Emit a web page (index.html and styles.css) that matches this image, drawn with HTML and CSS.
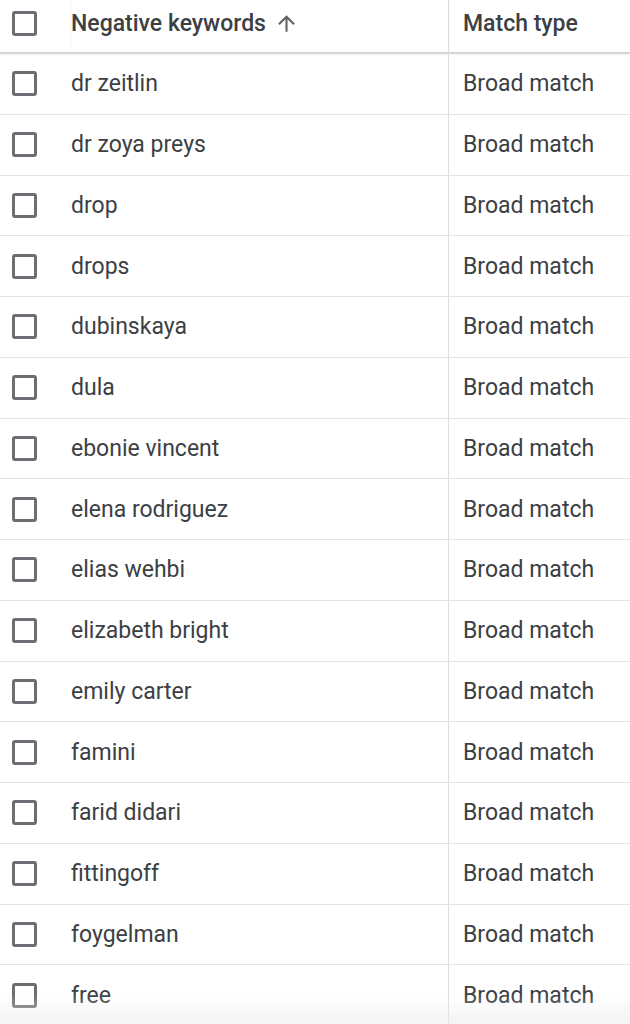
FILE: index.html
```html
<!DOCTYPE html>
<html lang="en">
<head>
  <meta charset="UTF-8" />
  <meta name="viewport" content="width=device-width, initial-scale=1" />
  <title>Negative keywords</title>
  <link rel="stylesheet" href="styles.css">
</head>
<body>
  <table class="kw-table">
    <thead>
      <tr>
        <th class="col-check"><span class="checkbox"></span></th>
        <th class="col-keyword">
          <span class="head-label">Negative keywords
            <svg class="sort-icon" viewBox="0 0 24 24" width="24" height="24"><path d="M4 12l1.41 1.41L11 7.83V20h2V7.83l5.58 5.59L20 12l-8-8-8 8z"/></svg>
          </span>
        </th>
        <th class="col-match">Match type</th>
      </tr>
    </thead>
    <tbody>
      <tr><td class="col-check"><span class="checkbox"></span></td><td class="col-keyword">dr zeitlin</td><td class="col-match">Broad match</td></tr>
      <tr><td class="col-check"><span class="checkbox"></span></td><td class="col-keyword">dr zoya preys</td><td class="col-match">Broad match</td></tr>
      <tr><td class="col-check"><span class="checkbox"></span></td><td class="col-keyword">drop</td><td class="col-match">Broad match</td></tr>
      <tr><td class="col-check"><span class="checkbox"></span></td><td class="col-keyword">drops</td><td class="col-match">Broad match</td></tr>
      <tr><td class="col-check"><span class="checkbox"></span></td><td class="col-keyword">dubinskaya</td><td class="col-match">Broad match</td></tr>
      <tr><td class="col-check"><span class="checkbox"></span></td><td class="col-keyword">dula</td><td class="col-match">Broad match</td></tr>
      <tr><td class="col-check"><span class="checkbox"></span></td><td class="col-keyword">ebonie vincent</td><td class="col-match">Broad match</td></tr>
      <tr><td class="col-check"><span class="checkbox"></span></td><td class="col-keyword">elena rodriguez</td><td class="col-match">Broad match</td></tr>
      <tr><td class="col-check"><span class="checkbox"></span></td><td class="col-keyword">elias wehbi</td><td class="col-match">Broad match</td></tr>
      <tr><td class="col-check"><span class="checkbox"></span></td><td class="col-keyword">elizabeth bright</td><td class="col-match">Broad match</td></tr>
      <tr><td class="col-check"><span class="checkbox"></span></td><td class="col-keyword">emily carter</td><td class="col-match">Broad match</td></tr>
      <tr><td class="col-check"><span class="checkbox"></span></td><td class="col-keyword">famini</td><td class="col-match">Broad match</td></tr>
      <tr><td class="col-check"><span class="checkbox"></span></td><td class="col-keyword">farid didari</td><td class="col-match">Broad match</td></tr>
      <tr><td class="col-check"><span class="checkbox"></span></td><td class="col-keyword">fittingoff</td><td class="col-match">Broad match</td></tr>
      <tr><td class="col-check"><span class="checkbox"></span></td><td class="col-keyword">foygelman</td><td class="col-match">Broad match</td></tr>
      <tr><td class="col-check"><span class="checkbox"></span></td><td class="col-keyword">free</td><td class="col-match">Broad match</td></tr>
    </tbody>
  </table>
  <div class="bottom-fade"></div>
</body>
</html>
```

FILE: styles.css
```css
body {
  margin: 0;
  background: #fff;
  font-family: Roboto, "Liberation Sans", Arial, sans-serif;
  color: #3c4043;
  overflow: hidden;
}
.kw-table {
  border-collapse: collapse;
  table-layout: fixed;
  width: 630px;
}
.kw-table th,
.kw-table td {
  padding: 0;
  text-align: left;
  vertical-align: middle;
  font-size: 23px;
  white-space: nowrap;
}
.kw-table th {
  height: 46px;
  padding-bottom: 6px;
  font-weight: 500;
  border-bottom: 2px solid #d6d6d6;
  box-shadow: 0 2px 2px rgba(0, 0, 0, 0.06);
}
.kw-table td {
  height: 59.75px;
  border-bottom: 1px solid #e2e3e5;
}
.col-check {
  width: 59px;
  padding-left: 12px !important;
}
.col-keyword {
  width: 377px;
}
.col-match {
  border-left: 1px solid #dcdde0;
  padding-left: 14px !important;
}
.checkbox {
  display: block;
  width: 19px;
  height: 19px;
  border: 3px solid #6b6e72;
  border-radius: 3px;
}
.head-label {
  display: inline-flex;
  align-items: center;
}
.sort-icon {
  width: 25px;
  height: 25px;
  margin-left: 8px;
  fill: #5f6368;
}
.bottom-fade {
  position: fixed;
  left: 0;
  right: 0;
  bottom: 0;
  height: 30px;
  background: linear-gradient(rgba(240, 240, 240, 0), rgba(236, 236, 236, 0.6));
  pointer-events: none;
}
```
